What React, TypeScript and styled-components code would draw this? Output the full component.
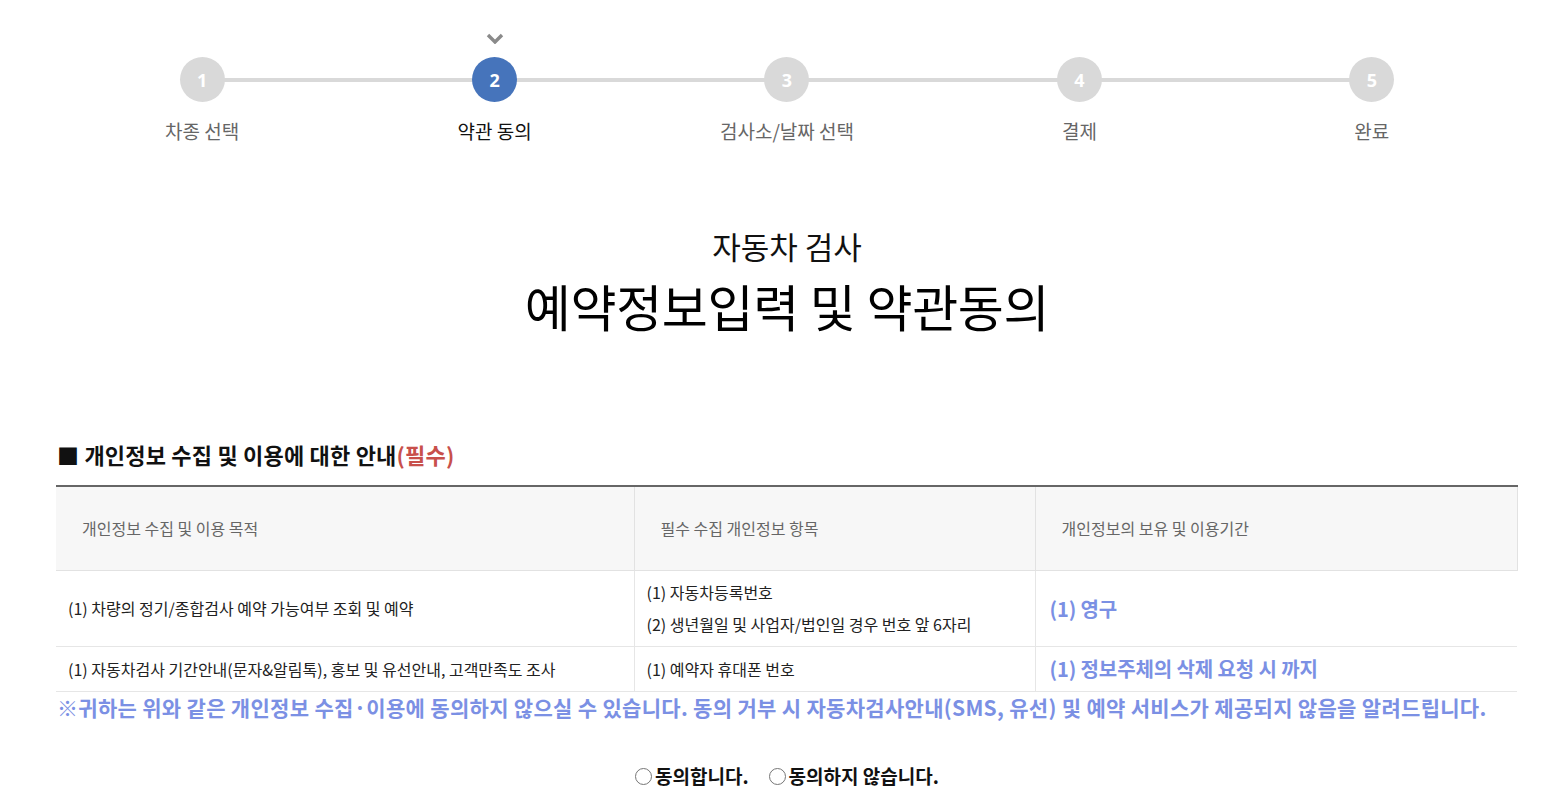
import React from "react";
import styled, { createGlobalStyle } from "styled-components";

const Global = createGlobalStyle`
  html, body { margin: 0; padding: 0; background: #fff; }
  body { font-family: "Noto Sans CJK KR", "Noto Sans", sans-serif; color: #222; }
  * { box-sizing: border-box; }
`;

const Page = styled.div`
  width: 1462px;
  margin-left: 56px;
`;

const Steps = styled.ol`
  list-style: none;
  margin: 0;
  padding: 28px 0 0;
  display: grid;
  grid-template-columns: repeat(5, 1fr);
  position: relative;
`;

const Track = styled.div`
  position: absolute;
  left: 146px;
  right: 146px;
  top: 78px;
  height: 4px;
  background: #d9d9d9;
`;

const Step = styled.li`
  display: flex;
  flex-direction: column;
  align-items: center;
  position: relative;
  z-index: 1;
`;

const CheckSlot = styled.div`
  height: 20px;
  display: flex;
  align-items: center;
  justify-content: center;
`;

const Circle = styled.div<{ $active?: boolean }>`
  margin-top: 9px;
  width: 45px;
  height: 45px;
  border-radius: 50%;
  background: ${(p) => (p.$active ? "#4674bb" : "#d9d9d9")};
  color: #fff;
  font-family: "Noto Sans", "Noto Sans CJK KR", sans-serif;
  font-weight: 700;
  font-size: 18px;
  display: flex;
  align-items: center;
  justify-content: center;
`;

const StepLabel = styled.div<{ $active?: boolean }>`
  margin-top: 19px;
  font-size: 19px;
  line-height: 1;
  letter-spacing: 0;
  color: ${(p) => (p.$active ? "#111" : "#666")};
`;

const TitleBlock = styled.div`
  text-align: center;
  margin-top: 90px;
`;

const Sub = styled.div`
  font-size: 31px;
  line-height: 1;
  letter-spacing: 0;
  color: #111;
`;

const Main = styled.h1`
  margin: 19px 0 0;
  font-size: 50px;
  line-height: 1;
  font-weight: 400;
  letter-spacing: -0.3px;
  color: #000;
`;

const SectionTitle = styled.h2`
  margin: 113px 0 0;
  font-size: 22px;
  line-height: 1;
  font-weight: 700;
  letter-spacing: 0.2px;
  color: #111;
  padding-left: 1px;
`;

const Red = styled.span`
  color: #c8504b;
`;

const Table = styled.table`
  margin-top: 20px;
  width: 1461px;
  border-collapse: collapse;
  border-top: 2px solid #666;
  table-layout: fixed;
`;

const Th = styled.th`
  background: #f7f7f7;
  height: 84px;
  padding: 0 0 0 26px;
  text-align: left;
  font-weight: 400;
  font-size: 16px;
  letter-spacing: 0;
  color: #666;
  border: 1px solid #e2e2e2;
  border-top: none;
  &:first-child { border-left: none; }
`;

const Td = styled.td<{ $h?: number }>`
  height: ${(p) => p.$h ?? 45}px;
  padding: 0 0 0 12px;
  font-size: 16px;
  letter-spacing: 0;
  color: #222;
  border-bottom: 1px solid #e6e6e6;
  border-left: 1px solid #e6e6e6;
  vertical-align: middle;
  &:first-child { border-left: none; }
`;

const BlueTd = styled(Td)`
  padding-left: 14px;
`;

const Line = styled.div`
  line-height: 32px;
`;

const Blue = styled.span`
  color: #7b90e4;
  font-weight: 700;
  font-size: 20px;
  letter-spacing: -0.1px;
`;

const Notice = styled.p`
  margin: 1px 0 0;
  padding-left: 1px;
  font-size: 21px;
  line-height: 28px;
  font-weight: 700;
  letter-spacing: 0.3px;
  color: #7b90e4;
  white-space: nowrap;
`;

const Choices = styled.div`
  margin-top: 41px;
  display: flex;
  justify-content: center;
  gap: 20px;
  padding-left: 0;
`;

const Choice = styled.label`
  display: flex;
  align-items: center;
  gap: 3px;
  font-size: 19px;
  font-weight: 700;
  letter-spacing: 0;
  color: #111;
`;

const Radio = styled.input`
  appearance: none;
  flex: none;
  margin: 3px 0 0 0;
  width: 17px;
  height: 17px;
  border: 1.5px solid #767676;
  border-radius: 50%;
  background: #fff;
  &:checked { border-color: #4674bb; box-shadow: inset 0 0 0 3px #fff; background: #4674bb; }
`;

const steps = ["차종 선택", "약관 동의", "검사소/날짜 선택", "결제", "완료"];

export default function App() {
  return (
    <>
      <Global />
      <Page>
        <Steps>
          <Track />
          {steps.map((s, i) => (
            <Step key={s}>
              <CheckSlot>
                {i === 1 && (
                  <svg width="18" height="12" viewBox="0 0 18 12">
                    <path d="M2 3 L9 10 L16 3" stroke="#8a8a8a" strokeWidth="3.4" fill="none" />
                  </svg>
                )}
              </CheckSlot>
              <Circle $active={i === 1}>{i + 1}</Circle>
              <StepLabel $active={i === 1}>{s}</StepLabel>
            </Step>
          ))}
        </Steps>

        <TitleBlock>
          <Sub>자동차 검사</Sub>
          <Main>예약정보입력 및 약관동의</Main>
        </TitleBlock>

        <SectionTitle>
          ■ 개인정보 수집 및 이용에 대한 안내<Red>(필수)</Red>
        </SectionTitle>

        <Table>
          <colgroup>
            <col style={{ width: 578 }} />
            <col style={{ width: 401 }} />
            <col style={{ width: 482 }} />
          </colgroup>
          <thead>
            <tr>
              <Th>개인정보 수집 및 이용 목적</Th>
              <Th>필수 수집 개인정보 항목</Th>
              <Th>개인정보의 보유 및 이용기간</Th>
            </tr>
          </thead>
          <tbody>
            <tr>
              <Td $h={76}>(1) 차량의 정기/종합검사 예약 가능여부 조회 및 예약</Td>
              <Td $h={76}>
                <Line>(1) 자동차등록번호</Line>
                <Line>(2) 생년월일 및 사업자/법인일 경우 번호 앞 6자리</Line>
              </Td>
              <BlueTd $h={76}>
                <Blue>(1) 영구</Blue>
              </BlueTd>
            </tr>
            <tr>
              <Td>(1) 자동차검사 기간안내(문자&amp;알림톡), 홍보 및 유선안내, 고객만족도 조사</Td>
              <Td>(1) 예약자 휴대폰 번호</Td>
              <BlueTd>
                <Blue>(1) 정보주체의 삭제 요청 시 까지</Blue>
              </BlueTd>
            </tr>
          </tbody>
        </Table>

        <Notice>
          ※귀하는 위와 같은 개인정보 수집·이용에 동의하지 않으실 수 있습니다. 동의 거부 시 자동차검사안내(SMS, 유선) 및 예약 서비스가 제공되지 않음을 알려드립니다.
        </Notice>

        <Choices>
          <Choice>
            <Radio type="radio" name="agree" />
            동의합니다.
          </Choice>
          <Choice>
            <Radio type="radio" name="agree" />
            동의하지 않습니다.
          </Choice>
        </Choices>
      </Page>
    </>
  );
}
